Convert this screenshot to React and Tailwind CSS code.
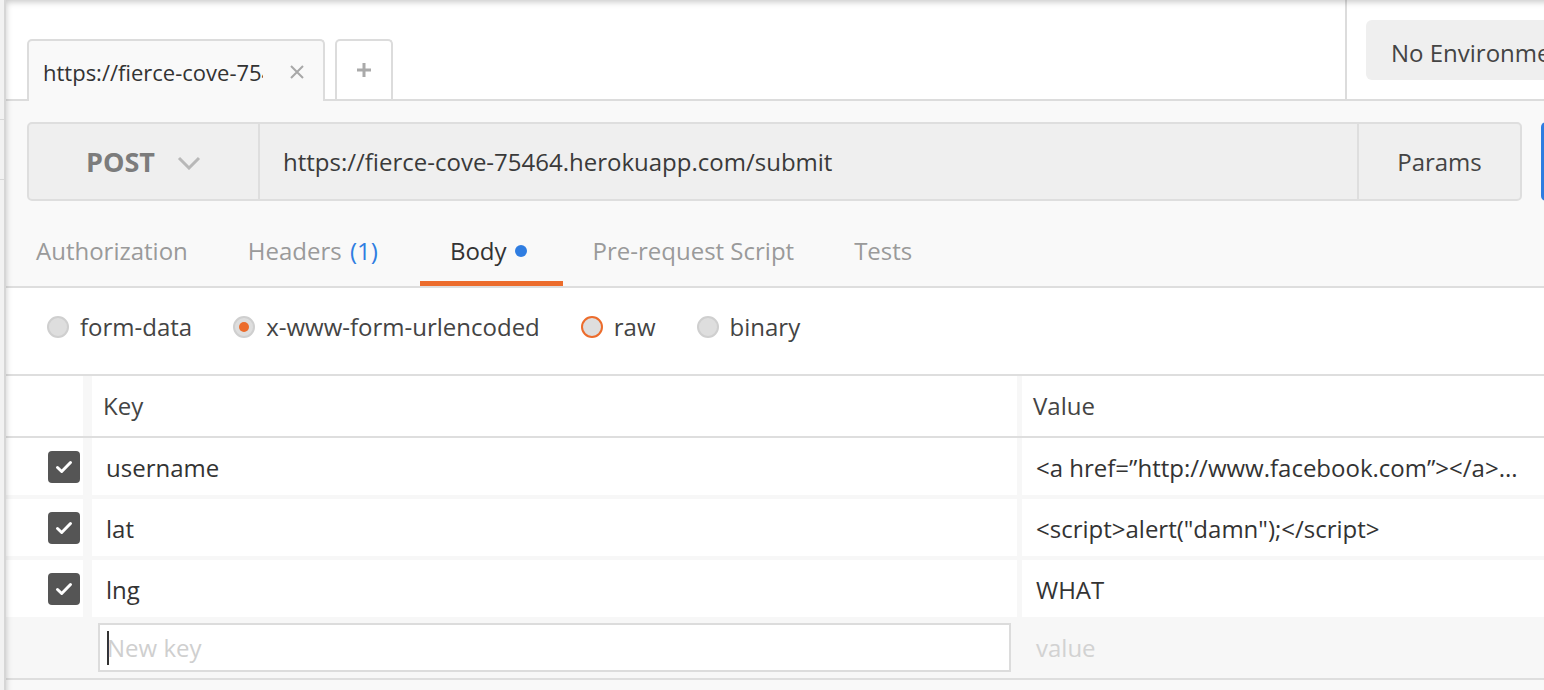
import React from 'react';

const rows = [
  { key: 'username', value: '<a href=\u201dhttp://www.facebook.com\u201d></a>...' },
  { key: 'lat', value: '<script>alert("damn");</script>' },
  { key: 'lng', value: 'WHAT' },
];

const bodyTypes = [
  { label: 'form-data', state: 'off' },
  { label: 'x-www-form-urlencoded', state: 'on' },
  { label: 'raw', state: 'hover' },
  { label: 'binary', state: 'off' },
];

function Radio({ state }) {
  if (state === 'on') {
    return (
      <span className="flex h-[22px] w-[22px] shrink-0 items-center justify-center rounded-full border-2 border-[#cfcfcf] bg-[#dedede]">
        <span className="h-[10px] w-[10px] rounded-full bg-[#ec6c2c]" />
      </span>
    );
  }
  return (
    <span
      className={`h-[22px] w-[22px] shrink-0 rounded-full border-2 bg-[#dedede] ${
        state === 'hover' ? 'border-[#ec6c2c]' : 'border-[#cfcfcf]'
      }`}
    />
  );
}

function Check() {
  return (
    <span className="flex h-[32px] w-[32px] items-center justify-center rounded-[4px] bg-[#555]">
      <svg width="18" height="14" viewBox="0 0 18 14">
        <path d="M2.5 7.5l4.2 4L15.5 2.5" stroke="#fff" strokeWidth="3" fill="none" strokeLinecap="round" strokeLinejoin="round" />
      </svg>
    </span>
  );
}

export default function App() {
  return (
    <div className="relative flex h-[690px] w-[1544px] overflow-hidden bg-[#f9f9f9] font-['Open_Sans',sans-serif] text-[24px] text-[#333]">
      {/* collapsed sidebar edge */}
      <div className="flex w-[6px] shrink-0 flex-col border-r-2 border-[#d6d6d6] bg-[#f2f2f2]">
        <div className="h-[120px] border-b border-[#d8d8d8]" />
        <div className="h-[60px] border-b border-[#d8d8d8]" />
      </div>

      <div className="relative flex min-w-0 flex-1 flex-col">
        {/* request tabs */}
        <div className="flex h-[101px] shrink-0 border-b-2 border-[#dcdcdc] bg-white">
          <div className="flex min-w-0 flex-1 items-end gap-[10px] pl-[21px]">
            <div className="-mb-[2px] flex h-[62px] w-[298px] items-center rounded-t-[5px] border-2 border-b-0 border-[#dcdcdc] bg-[#f9f9f9] pt-[2px] pl-[14px] pr-[18px]">
              <span className="w-[220px] overflow-hidden whitespace-nowrap text-[22px] text-[#333]">
                https://fierce-cove-75464.herokuapp.com/submit
              </span>
              <svg className="ml-auto" width="16" height="16" viewBox="0 0 16 16">
                <path d="M2 2l12 12M14 2L2 14" stroke="#a8a8a8" strokeWidth="2" />
              </svg>
            </div>
            <div className="flex h-[60px] w-[58px] items-center justify-center rounded-t-[5px] border-2 border-b-0 border-[#dcdcdc] bg-white">
              <svg width="16" height="16" viewBox="0 0 16 16">
                <path d="M8 1v14M1 8h14" stroke="#aaa" strokeWidth="3" />
              </svg>
            </div>
          </div>
          <div className="flex w-[199px] shrink-0 overflow-hidden">
            <div className="w-[2px] shrink-0 bg-[#dcdcdc]" />
            <div className="ml-[19px] mt-[20px] flex h-[60px] w-[260px] shrink-0 items-center whitespace-nowrap rounded-[6px] bg-[#efefef] pl-[25px] pt-[5px] text-[#444]">
              No Environment
            </div>
          </div>
        </div>

        {/* url bar */}
        <div className="mt-[21px] flex shrink-0 gap-[19px] pl-[21px]">
          <div className="flex h-[79px] w-[1495px] shrink-0 rounded-[5px] border-2 border-[#dedede] bg-[#efefef]">
            <div className="flex w-[231px] shrink-0 items-center justify-center gap-[22px] border-r-2 border-[#dedede] pt-[2px]">
              <span className="text-[27px] font-bold text-[#7c7c7c]">POST</span>
              <svg width="24" height="14" viewBox="0 0 24 14">
                <path d="M2 2l10 10L22 2" stroke="#b8b8b8" strokeWidth="3" fill="none" />
              </svg>
            </div>
            <div className="flex flex-1 items-center pl-[23px] text-[#3a3a3a]">
              https://fierce-cove-75464.herokuapp.com/submit
            </div>
            <div className="flex w-[163px] shrink-0 items-center justify-center border-l-2 border-[#dedede] text-[#444]">
              Params
            </div>
          </div>
          <div className="h-[79px] w-[120px] shrink-0 rounded-[5px] bg-[#2f7de1]" />
        </div>

        {/* section tabs */}
        <div className="flex h-[87px] shrink-0 items-end border-b-2 border-[#dedede]">
          <div className="border-b-[5px] border-transparent px-[30px] pb-[14px] leading-[32px] text-[#9a9a9a]">Authorization</div>
          <div className="border-b-[5px] border-transparent pl-[30px] pr-[42px] pb-[14px] leading-[32px] text-[#9a9a9a]">
            Headers <span className="ml-[2px] text-[#2f7de1]">(1)</span>
          </div>
          <div className="flex items-center border-b-[5px] border-[#ec6c2c] pl-[30px] pr-[36px] pb-[14px] leading-[32px] text-[#333]">
            Body
            <span className="ml-[8px] h-[12px] w-[12px] rounded-full bg-[#2f7de1]" />
          </div>
          <div className="border-b-[5px] border-transparent px-[30px] pb-[14px] leading-[32px] text-[#9a9a9a]">Pre-request Script</div>
          <div className="border-b-[5px] border-transparent px-[30px] pb-[14px] leading-[32px] text-[#9a9a9a]">Tests</div>
        </div>

        {/* body type */}
        <div className="flex h-[88px] shrink-0 items-center border-b-2 border-[#dedede] bg-white pb-[8px] pl-[41px] text-[#444]">
          {bodyTypes.map((t) => (
            <div key={t.label} className="mr-[41px] flex items-center gap-[11px]">
              <Radio state={t.state} />
              <span>{t.label}</span>
            </div>
          ))}
        </div>

        {/* key / value table */}
        <div className="flex shrink-0 flex-col bg-[#f7f7f7]">
          <div className="flex h-[62px] border-b-2 border-[#dedede]">
            <div className="w-[77px] shrink-0 bg-white" />
            <div className="ml-[9px] flex w-[925px] shrink-0 items-center bg-white pl-[11px] text-[#444]">Key</div>
            <div className="ml-[5px] flex flex-1 items-center bg-white pl-[11px] text-[#444]">Value</div>
          </div>
          <div className="flex flex-col gap-[4px]">
            {rows.map((r) => (
              <div key={r.key} className="flex h-[57px]">
                <div className="flex w-[77px] shrink-0 items-center bg-white pl-[42px]">
                  <Check />
                </div>
                <div className="ml-[9px] flex w-[925px] shrink-0 items-center bg-white pl-[14px] pt-[2px]">{r.key}</div>
                <div className="ml-[5px] flex flex-1 items-center whitespace-nowrap bg-white pl-[14px] pt-[2px]">{r.value}</div>
              </div>
            ))}
          </div>
          <div className="flex h-[63px] items-center border-b-2 border-[#dedede]">
            <div className="w-[77px] shrink-0" />
            <div className="ml-[15px] flex h-[49px] w-[913px] shrink-0 items-center border-2 border-[#dcdcdc] bg-white pl-[7px] text-[#cfcfcf]">
              <span className="mr-[-2px] h-[34px] w-[2px] bg-[#333]" />
              New key
            </div>
            <div className="ml-[25px] text-[#d2d2d2]">value</div>
          </div>
        </div>

        {/* window edge shading */}
        <div className="pointer-events-none absolute inset-0 shadow-[inset_3px_5px_6px_-3px_rgba(0,0,0,0.22)]" />
      </div>
    </div>
  );
}
